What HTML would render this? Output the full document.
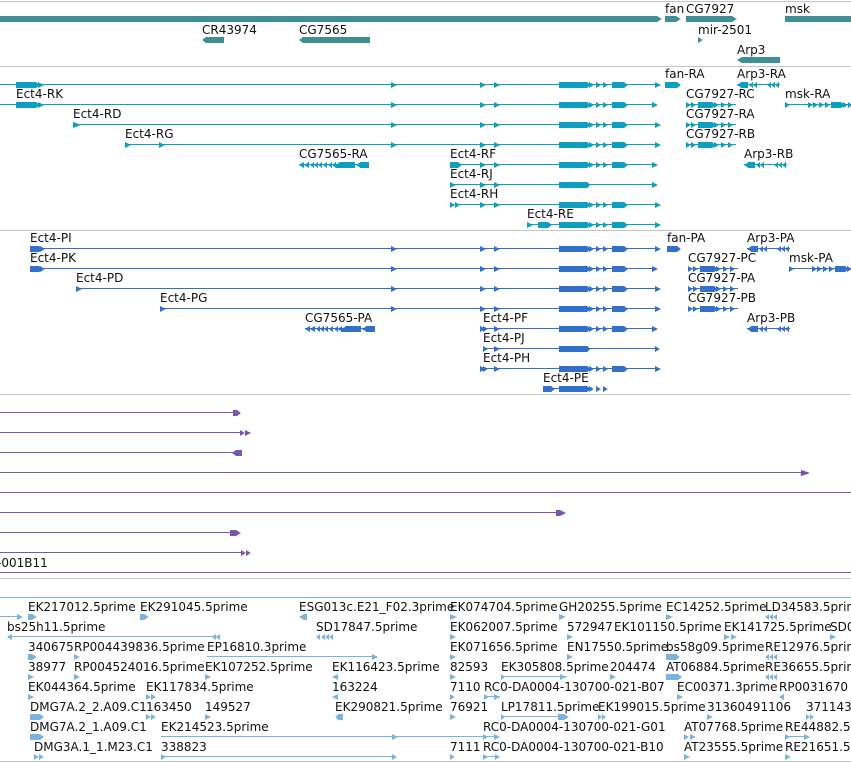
<!DOCTYPE html>
<html><head><meta charset="utf-8"><style>
html,body{margin:0;padding:0;background:#fff;width:851px;height:762px;overflow:hidden}
svg{display:block}
text{font-family:"DejaVu Sans","Liberation Sans",sans-serif;font-size:12px;fill:#111}
</style></head><body>
<svg width="851" height="762" viewBox="0 0 851 762" xmlns="http://www.w3.org/2000/svg" shape-rendering="crispEdges">
<defs>
<g id="ex">
 <path d="M480 -3l6 3-6 3z M494 -3l6 3-6 3z"/>
 <path d="M559 -3h28l3 3-3 3h-28z M589 -3l5 3-5 3z M596 -3l5 3-5 3z M603 -3l5 3-5 3z M612 -3h12l4 3-4 3h-12z"/>
</g>
<g id="exb">
 <path d="M559 -3h28l3 3-3 3h-28z M589 -3l5 3-5 3z M596 -3l5 3-5 3z M603 -3l5 3-5 3z M612 -3h12l4 3-4 3h-12z"/>
</g>
<g id="a391"><path d="M391 -3l6 3-6 3z"/></g>
<g id="cg79"><path d="M0 -3l5 3-5 3z M5 -3l5 3-5 3z M12 -3h14l3 3-3 3h-14z M28 -3l5 3-5 3z M35 -3l5 3-5 3z M42 -3l5 3-5 3z"/><rect x="0" y="-1" width="50" height="1"/></g>
<g id="arp"><path d="M0 0l5 -3v6z M4 -3h7v6h-7z M12 0l4 -3v6z M16 0l4 -3v6z"/><rect x="0" y="-1" width="43" height="1"/><path d="M30 0l4 -3v6z M34 0l4 -3v6z M38 0l4 -3v6z"/></g>
<g id="cg75"><rect x="0" y="-1" width="70" height="1"/><path d="M0 0l5-3v6z M5 0l5-3v6z M11 0l4-3v6z M15 0l4-3v6z M19 0l4-3v6z M24 0l4-3v6z M29 0l4-3v6z M33 0l4-3v6z M37 0l4-3v6h-4z M41 -3h15v6h-15z M57 0l5-3v6z M61 -3h9v6h-9z"/></g>
<g id="msk"><rect x="0" y="-1" width="66" height="1"/><path d="M0 -3l5 3-5 3z M23 -3l5 3-5 3z M28 -3l5 3-5 3z M34 -3l5 3-5 3z M40 -3l5 3-5 3z M46 -3h10l4 3-4 3h-10z M58 -3l5 3-5 3z M63 -3l4 3-4 3z"/></g>
</defs>

<g fill="#c4c4c4">
<rect x="0" y="1" width="851" height="1"/>
<rect x="0" y="66" width="851" height="1"/>
<rect x="0" y="230" width="851" height="1"/>
<rect x="0" y="394" width="851" height="1"/>
<rect x="0" y="578" width="851" height="1"/>
<rect x="0" y="761" width="851" height="1"/>
</g>

<g fill="#3f8f95">
<path d="M0 16h657l5 3-5 3h-657z"/>
<path d="M665 16h11l5 3-5 3h-11z"/>
<path d="M686 16h46l5 3-5 3h-46z"/>
<rect x="785" y="16" width="66" height="6"/>
<path d="M202 40l4-3h18v6h-18z"/>
<path d="M299 40l4-3h67v6h-67z"/>
<path d="M698 37l5 3-5 3z"/>
<path d="M737 60l5-3h38v6h-38z"/>
</g>
<text x="665" y="13">fan</text><text x="686" y="13">CG7927</text><text x="785" y="13">msk</text>
<text x="202" y="34">CR43974</text><text x="299" y="34">CG7565</text>
<text x="698" y="34">mir-2501</text><text x="737" y="54">Arp3</text>

<g fill="#0e9fc0">
<rect x="0" y="84" width="655" height="1"/><use href="#ex" y="85"/><use href="#a391" y="85"/><path d="M655 82l6 3-6 3z"/>
<path d="M16 82h20l3 3-3 3h-20z M38 82l6 3-6 3z"/>
<rect x="665" y="82" width="12" height="6"/><path d="M677 82l4 3-4 3z"/>
<use href="#arp" x="737" y="85"/>
<rect x="0" y="104" width="652" height="1"/><use href="#ex" y="105"/><use href="#a391" y="105"/><path d="M652 102l6 3-6 3z"/>
<path d="M16 102h20l3 3-3 3h-20z M38 102l6 3-6 3z"/>
<use href="#cg79" x="686" y="105"/><use href="#msk" x="785" y="105"/>
<rect x="73" y="124" width="582" height="1"/><use href="#ex" y="125"/><use href="#a391" y="125"/><path d="M655 122l6 3-6 3z M73 122l8 3-8 3z"/>
<use href="#cg79" x="686" y="125"/>
<rect x="125" y="144" width="530" height="1"/><use href="#ex" y="145"/><use href="#a391" y="145"/><path d="M655 142l6 3-6 3z M125 142l6 3-6 3z M159 142l6 3-6 3z"/>
<use href="#cg79" x="686" y="145"/>
<use href="#cg75" x="299" y="165"/>
<rect x="450" y="164" width="202" height="1"/><use href="#ex" y="165"/><path d="M652 162l6 3-6 3z M450 162h8l4 3-4 3h-8z"/>
<use href="#arp" x="744" y="165"/>
<rect x="450" y="184" width="202" height="1"/><path d="M559 182h28l3 3-3 3h-28z M480 182l6 3-6 3z M494 182l6 3-6 3z M652 182l6 3-6 3z M450 182l6 3-6 3z"/>
<rect x="450" y="204" width="205" height="1"/><use href="#ex" y="205"/><path d="M655 202l6 3-6 3z M450 202l5 3-5 3z M455 202l5 3-5 3z"/>
<rect x="527" y="224" width="128" height="1"/><use href="#exb" y="225"/><path d="M655 222l6 3-6 3z M527 222l6 3-6 3z M538 222h10l4 3-4 3h-10z"/>
</g>
<text x="665" y="78">fan-RA</text><text x="737" y="78">Arp3-RA</text>
<text x="16" y="98">Ect4-RK</text><text x="686" y="98">CG7927-RC</text><text x="785" y="98">msk-RA</text>
<text x="73" y="118">Ect4-RD</text><text x="686" y="118">CG7927-RA</text>
<text x="125" y="138">Ect4-RG</text><text x="686" y="138">CG7927-RB</text>
<text x="299" y="158">CG7565-RA</text><text x="450" y="158">Ect4-RF</text><text x="744" y="158">Arp3-RB</text>
<text x="450" y="178">Ect4-RJ</text><text x="450" y="198">Ect4-RH</text><text x="527" y="218">Ect4-RE</text>

<g fill="#3370cc">
<rect x="30" y="248" width="625" height="1"/><use href="#ex" y="249"/><use href="#a391" y="249"/><path d="M655 246l6 3-6 3z M30 246h9l4 3-4 3h-9z M40 246l5 3-5 3z"/>
<rect x="667" y="246" width="10" height="6"/><path d="M677 246l4 3-4 3z"/><use href="#arp" x="747" y="249"/>
<rect x="30" y="268" width="622" height="1"/><use href="#ex" y="269"/><use href="#a391" y="269"/><path d="M652 266l6 3-6 3z M30 266h9l4 3-4 3h-9z M40 266l5 3-5 3z"/>
<use href="#cg79" x="688" y="269"/><use href="#msk" x="789" y="269"/>
<rect x="76" y="288" width="579" height="1"/><use href="#ex" y="289"/><use href="#a391" y="289"/><path d="M655 286l6 3-6 3z M76 286l6 3-6 3z"/><use href="#cg79" x="688" y="289"/>
<rect x="160" y="308" width="495" height="1"/><use href="#ex" y="309"/><use href="#a391" y="309"/><path d="M655 306l6 3-6 3z M160 306l6 3-6 3z"/><use href="#cg79" x="688" y="309"/>
<use href="#cg75" x="305" y="329"/>
<rect x="483" y="328" width="169" height="1"/><use href="#ex" y="329"/><path d="M652 326l6 3-6 3z M483 326l5 3-5 3z"/><use href="#arp" x="747" y="329"/>
<rect x="483" y="348" width="172" height="1"/><path d="M559 346h28l3 3-3 3h-28z M494 346l6 3-6 3z M655 346l5 3-5 3z M483 346l5 3-5 3z"/>
<rect x="483" y="368" width="172" height="1"/><use href="#ex" y="369"/><path d="M655 366l6 3-6 3z M483 366l5 3-5 3z"/>
<path d="M543 386h8l4 3-4 3h-8z M559 386h28l3 3-3 3h-28z M589 386l5 3-5 3z M596 386l5 3-5 3z M603 386l5 3-5 3z"/><rect x="543" y="388" width="20" height="1"/>
</g>
<text x="30" y="242">Ect4-PI</text><text x="667" y="242">fan-PA</text><text x="747" y="242">Arp3-PA</text>
<text x="30" y="262">Ect4-PK</text><text x="688" y="262">CG7927-PC</text><text x="789" y="262">msk-PA</text>
<text x="76" y="282">Ect4-PD</text><text x="688" y="282">CG7927-PA</text>
<text x="160" y="302">Ect4-PG</text><text x="688" y="302">CG7927-PB</text>
<text x="305" y="322">CG7565-PA</text><text x="483" y="322">Ect4-PF</text><text x="747" y="322">Arp3-PB</text>
<text x="483" y="342">Ect4-PJ</text><text x="483" y="362">Ect4-PH</text><text x="543" y="382">Ect4-PE</text>

<g fill="#7a55b0">
<rect x="0" y="412" width="235" height="1"/><path d="M233 410h4l4 3-4 3h-4z"/>
<rect x="0" y="432" width="243" height="1"/><path d="M240 430l5 3-5 3z M245 430l6 3-6 3z"/>
<rect x="0" y="452" width="236" height="1"/><path d="M232 453l4-3h6v6h-6z"/>
<rect x="0" y="472" width="805" height="1"/><path d="M801 470l9 3-9 3z"/>
<rect x="0" y="492" width="851" height="1"/>
<rect x="0" y="512" width="560" height="1"/><path d="M556 510h4l6 3-6 3h-4z"/>
<rect x="0" y="532" width="233" height="1"/><path d="M230 530h6l5 3-5 3h-6z"/>
<rect x="0" y="552" width="243" height="1"/><path d="M241 550l5 3-5 3z M246 550l5 3-5 3z"/>
<rect x="0" y="572" width="851" height="1"/>
</g>
<text x="-3" y="567">-001B11</text>

<g fill="#7ab4dc">
<rect x="0" y="597" width="851" height="1"/>
<rect x="0" y="616" width="18" height="1"/>
<path d="M17 614l6 3-6 3z M28 614h4l5 3-5 3h-4z M140 614h4l5 3-5 3h-4z M299 617l5-3h3v6h-3z M450 614l7 3-7 3z M559 614l7 3-7 3z M666 614l7 3-7 3z M765 617l4-3v6z M769 617l4-3v6z M773 617l4-3v6z"/>
<rect x="9" y="636" width="210" height="1"/>
<path d="M7 637l5-3v6z M212 637l4-3v6z M216 637l4-3v6z M316 637l4-3v6z M321 637l4-3v6z M325 637l4-3v6z M329 637l4-3v6z M450 634l6 3-6 3z M567 634l6 3-6 3z M724 634l6 3-6 3z M731 634l6 3-6 3z M830 634l6 3-6 3z"/>
<rect x="207" y="656" width="170" height="1"/>
<path d="M28 654h4l5 3-5 3h-4z M74 654l6 3-6 3z M372 654l6 3-6 3z M450 654l6 3-6 3z M567 654l6 3-6 3z M666 654h10l4 3-4 3h-10z M765 657l4-3v6z M769 657l4-3v6z M773 657l4-3v6z"/>
<rect x="501" y="676" width="66" height="1"/>
<path d="M28 674l6 3-6 3z M74 674l6 3-6 3z M205 674l6 3-6 3z M332 677l6-3v6z M450 674l6 3-6 3z M501 674l4 3-4 3z M560 674l6 3-6 3z M610 674l6 3-6 3z M666 674h12l4 3-4 3h-12z M765 677l4-3v6z M769 677l4-3v6z M773 677l4-3v6z"/>
<rect x="484" y="696" width="16" height="1"/>
<path d="M28 694l6 3-6 3z M146 694l5 3-5 3z M151 694l5 3-5 3z M332 697l6-3v6z M450 694l5 3-5 3z M484 694l5 3-5 3z M494 694l6 3-6 3z M677 694l6 3-6 3z M779 697l5-3v6z"/>
<rect x="501" y="716" width="66" height="1"/>
<path d="M30 714h10l4 3-4 3h-10z M146 714l5 3-5 3z M151 714l5 3-5 3z M205 714l6 3-6 3z M335 717l3-3h5v6h-5z M450 714l6 3-6 3z M501 714l4 3-4 3z M558 714h6l5 3-5 3h-6z M598 714l4 3-4 3z M602 714l4 3-4 3z M707 714l6 3-6 3z M806 714l4 3-4 3z M810 714l4 3-4 3z"/>
<rect x="161" y="736" width="336" height="1"/><rect x="785" y="736" width="22" height="1"/>
<path d="M30 734h10l4 3-4 3h-10z M392 734l6 3-6 3z M483 734l5 3-5 3z M494 734l6 3-6 3z M684 734l5 3-5 3z M690 734l6 3-6 3z M785 734l5 3-5 3z M804 734l6 3-6 3z"/>
<rect x="161" y="756" width="235" height="1"/><rect x="483" y="756" width="16" height="1"/>
<path d="M34 754l5 3-5 3z M39 754l5 3-5 3z M161 754l5 3-5 3z M392 754l5 3-5 3z M450 754l5 3-5 3z M483 754l5 3-5 3z M495 754l5 3-5 3z M684 754l6 3-6 3z M785 754l6 3-6 3z"/>
</g>
<g>
<text x="28" y="611">EK217012.5prime</text><text x="140" y="611">EK291045.5prime</text><text x="299" y="611">ESG013c.E21_F02.3prime</text><text x="450" y="611">EK074704.5prime</text><text x="559" y="611">GH20255.5prime</text><text x="666" y="611">EC14252.5prime</text><text x="765" y="611">LD34583.5prime</text>
<text x="7" y="631">bs25h11.5prime</text><text x="316" y="631">SD17847.5prime</text><text x="450" y="631">EK062007.5prime</text><text x="567" y="631">572947</text><text x="614" y="631">EK101150.5prime</text><text x="724" y="631">EK141725.5prime</text><text x="830" y="631">SD0</text>
<text x="28" y="651">340675</text><text x="74" y="651">RP004439836.5prime</text><text x="207" y="651">EP16810.3prime</text><text x="450" y="651">EK071656.5prime</text><text x="567" y="651">EN17550.5prime</text><text x="666" y="651">bs58g09.5prime</text><text x="765" y="651">RE12976.5prime</text>
<text x="28" y="671">38977</text><text x="74" y="671">RP004524016.5prime</text><text x="205" y="671">EK107252.5prime</text><text x="332" y="671">EK116423.5prime</text><text x="450" y="671">82593</text><text x="501" y="671">EK305808.5prime</text><text x="610" y="671">204474</text><text x="666" y="671">AT06884.5prime</text><text x="765" y="671">RE36655.5prime</text>
<text x="28" y="691">EK044364.5prime</text><text x="146" y="691">EK117834.5prime</text><text x="332" y="691">163224</text><text x="450" y="691">7110</text><text x="484" y="691">RC0-DA0004-130700-021-B07</text><text x="677" y="691">EC00371.3prime</text><text x="779" y="691">RP0031670</text>
<text x="30" y="711">DMG7A.2_2.A09.C1</text><text x="146" y="711">163450</text><text x="205" y="711">149527</text><text x="335" y="711">EK290821.5prime</text><text x="450" y="711">76921</text><text x="501" y="711">LP17811.5prime</text><text x="598" y="711">EK199015.5prime</text><text x="707" y="711">31360491106</text><text x="806" y="711">371143</text>
<text x="30" y="731">DMG7A.2_1.A09.C1</text><text x="161" y="731">EK214523.5prime</text><text x="483" y="731">RC0-DA0004-130700-021-G01</text><text x="684" y="731">AT07768.5prime</text><text x="785" y="731">RE44882.5</text>
<text x="34" y="751">DMG3A.1_1.M23.C1</text><text x="161" y="751">338823</text><text x="450" y="751">7111</text><text x="483" y="751">RC0-DA0004-130700-021-B10</text><text x="684" y="751">AT23555.5prime</text><text x="785" y="751">RE21651.5p</text>
</g>
</svg>
</body></html>
